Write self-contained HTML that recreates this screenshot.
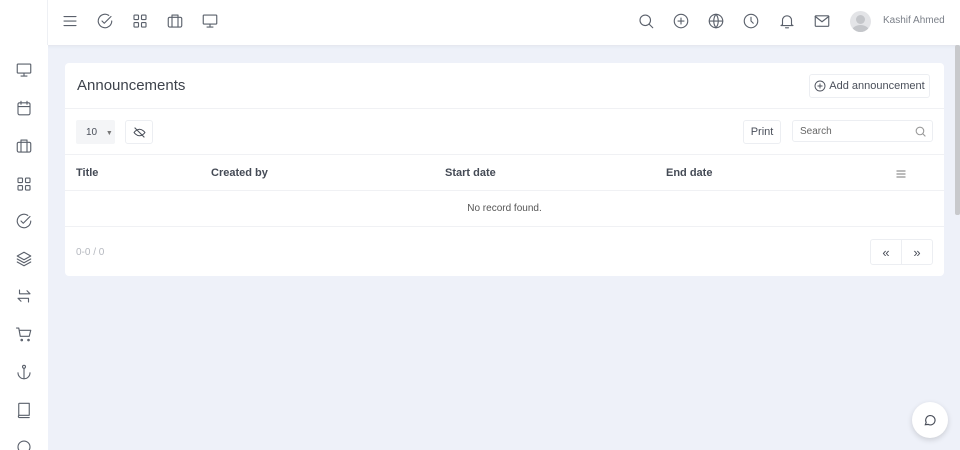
<!DOCTYPE html>
<html><head><meta charset="utf-8"><style>
*{box-sizing:border-box;margin:0;padding:0}
html,body{width:960px;height:450px;overflow:hidden}
body{background:#eef1f9;font-family:"Liberation Sans",sans-serif;color:#4a4f5a;position:relative}
.top{position:absolute;left:0;top:0;width:960px;height:45px;background:#fff;box-shadow:0 1px 4px rgba(0,0,0,.06)}
.top .lb{position:absolute;left:0;top:0;width:48px;height:45px;border-right:1px solid #eef0f4}
.side{position:absolute;left:0;top:45px;width:48px;height:405px;background:#fff}
svg.i{position:absolute;width:18px;height:18px;fill:none;stroke:#5a606b;stroke-width:1.5;stroke-linecap:round;stroke-linejoin:round}
.card{position:absolute;left:65px;top:63px;width:879px;height:213px;background:#fff;border-radius:4px}
.row{position:absolute;left:0;width:879px;border-bottom:1px solid #f0f1f4}
.btn{position:absolute;border:1px solid #eceef2;border-radius:3px;background:#fff;font-size:11px;color:#4a4f5a;display:flex;align-items:center;justify-content:center}
.th{position:absolute;top:12px;font-size:11px;font-weight:bold;color:#444a55}
.scroll{position:absolute;left:955px;top:45px;width:5px;height:170px;background:#c8c9cc;border-radius:2px}
</style></head><body>
<div class="top"><div class="lb"></div>
<svg class="i" style="left:61px;top:12px" viewBox="0 0 24 24"><path d="M4 6h16M4 12h16M4 18h16"/></svg>
<svg class="i" style="left:96px;top:12px" viewBox="0 0 24 24"><path d="M21 12a9 9 0 1 1-4-7.5"/><path d="M8 12l3 3 9-9"/></svg>
<svg class="i" style="left:131px;top:12px" viewBox="0 0 24 24"><rect x="4" y="4" width="6" height="6" rx="1"/><rect x="14" y="4" width="6" height="6" rx="1"/><rect x="4" y="14" width="6" height="6" rx="1"/><rect x="14" y="14" width="6" height="6" rx="1"/></svg>
<svg class="i" style="left:166px;top:12px" viewBox="0 0 24 24"><rect x="3" y="7" width="18" height="13" rx="2"/><path d="M8 7V4h8v3M8 7v13M16 7v13"/></svg>
<svg class="i" style="left:201px;top:12px" viewBox="0 0 24 24"><rect x="3" y="4" width="18" height="12" rx="1"/><path d="M12 16v4M8 20h8"/></svg>
<svg class="i" style="left:637px;top:12px" viewBox="0 0 24 24"><circle cx="11" cy="11" r="7"/><path d="M16 16l5 5"/></svg>
<svg class="i" style="left:672px;top:12px" viewBox="0 0 24 24"><circle cx="12" cy="12" r="9"/><path d="M12 8v8M8 12h8"/></svg>
<svg class="i" style="left:707px;top:12px" viewBox="0 0 24 24"><circle cx="12" cy="12" r="9"/><path d="M3 12h18M12 3c-4 5-4 13 0 18M12 3c4 5 4 13 0 18"/></svg>
<svg class="i" style="left:742px;top:12px" viewBox="0 0 24 24"><circle cx="12" cy="12" r="9"/><path d="M12 7v5l3 3"/></svg>
<svg class="i" style="left:778px;top:12px" viewBox="0 0 24 24"><path d="M6 17V11a6 6 0 0 1 12 0v6l2 1H4z"/><path d="M10 21h4"/></svg>
<svg class="i" style="left:813px;top:12px" viewBox="0 0 24 24"><rect x="3" y="5" width="18" height="14" rx="1"/><path d="M3 6l9 7 9-7"/></svg>
<div style="position:absolute;left:850px;top:11px;width:21px;height:21px;border-radius:50%;background:#e3e4e7;overflow:hidden"><div style="position:absolute;left:6px;top:4px;width:9px;height:9px;border-radius:50%;background:#c4c6ca"></div><div style="position:absolute;left:2px;top:14px;width:17px;height:12px;border-radius:50%;background:#c4c6ca"></div></div>
<div style="position:absolute;left:883px;top:15px;font-size:10px;color:#7a7f88">Kashif Ahmed</div>
</div>
<div class="side">
<svg class="i" style="left:15px;top:16px" viewBox="0 0 24 24"><rect x="3" y="4" width="18" height="12" rx="1"/><path d="M12 16v4M8 20h8"/></svg>
<svg class="i" style="left:15px;top:54px" viewBox="0 0 24 24"><rect x="4" y="5" width="16" height="16" rx="2"/><path d="M4 10h16M8 3v4M16 3v4"/></svg>
<svg class="i" style="left:15px;top:92px" viewBox="0 0 24 24"><rect x="3" y="7" width="18" height="13" rx="2"/><path d="M8 7V4h8v3M8 7v13M16 7v13"/></svg>
<svg class="i" style="left:15px;top:130px" viewBox="0 0 24 24"><rect x="4" y="4" width="6" height="6" rx="1"/><rect x="14" y="4" width="6" height="6" rx="1"/><rect x="4" y="14" width="6" height="6" rx="1"/><rect x="14" y="14" width="6" height="6" rx="1"/></svg>
<svg class="i" style="left:15px;top:167px" viewBox="0 0 24 24"><path d="M21 12a9 9 0 1 1-4-7.5"/><path d="M8 12l3 3 9-9"/></svg>
<svg class="i" style="left:15px;top:205px" viewBox="0 0 24 24"><path d="M12 3l9 5-9 5-9-5z"/><path d="M3 12l9 5 9-5M3 16l9 5 9-5"/></svg>
<svg class="i" style="left:15px;top:242px" viewBox="0 0 24 24"><path d="M6 4v5h14l-4-4M18 20v-5H4l4 4"/></svg>
<svg class="i" style="left:15px;top:280px" viewBox="0 0 24 24"><path d="M2 4h3l2 11h12l2-8H6"/><circle cx="9" cy="20" r="1"/><circle cx="18" cy="20" r="1"/></svg>
<svg class="i" style="left:15px;top:318px" viewBox="0 0 24 24"><circle cx="12" cy="5" r="2"/><path d="M12 7v14M4 13a8 8 0 0 0 16 0"/></svg>
<svg class="i" style="left:15px;top:356px" viewBox="0 0 24 24"><path d="M5 19V4a1 1 0 0 1 1-1h13v16H6a1 1 0 0 0 0 3h13"/></svg>
<svg class="i" style="left:15px;top:393px" viewBox="0 0 24 24"><circle cx="12" cy="12" r="8"/></svg>
</div>
<div class="card">
<div class="row" style="top:0;height:46px"><div style="position:absolute;left:12px;top:14px;font-size:15px;color:#3e434c">Announcements</div>
<div class="btn" style="left:744px;top:11px;width:121px;height:24px"><svg style="width:12px;height:12px;margin-right:3px;fill:none;stroke:#4a4f5a;stroke-width:1.8" viewBox="0 0 24 24"><circle cx="12" cy="12" r="10"/><path d="M12 7v10M7 12h10"/></svg>Add announcement</div></div>
<div class="row" style="top:46px;height:46px">
<div style="position:absolute;left:11px;top:11px;width:39px;height:24px;background:#f4f5f7;border-radius:2px;font-size:10px;padding:7px 0 0 10px">10 <span style="font-size:7px;margin-left:6px;color:#777">▼</span></div>
<div class="btn" style="left:60px;top:11px;width:28px;height:24px"><svg style="width:13px;height:13px;fill:none;stroke:#4a4f5a;stroke-width:2" viewBox="0 0 24 24"><path d="M2 12s4-6 10-6 10 6 10 6-4 6-10 6S2 12 2 12z"/><path d="M3 3l18 18"/></svg></div>
<div class="btn" style="left:678px;top:11px;width:38px;height:24px">Print</div>
<div class="btn" style="left:727px;top:11px;width:141px;height:22px;justify-content:flex-start;padding-left:7px;font-size:10px;color:#666">Search<svg style="position:absolute;right:5px;top:4px;width:13px;height:13px;fill:none;stroke:#999;stroke-width:2" viewBox="0 0 24 24"><circle cx="11" cy="11" r="7"/><path d="M16 16l5 5"/></svg></div></div>
<div class="row" style="top:92px;height:36px">
<div class="th" style="left:11px">Title</div><div class="th" style="left:146px">Created by</div><div class="th" style="left:380px">Start date</div><div class="th" style="left:601px">End date</div>
<svg style="position:absolute;left:830px;top:13px;width:12px;height:12px;fill:none;stroke:#777;stroke-width:2" viewBox="0 0 24 24"><path d="M3 6h18M3 12h18M3 18h18"/></svg></div>
<div class="row" style="top:128px;height:36px"><div style="position:absolute;left:0;width:879px;top:12px;text-align:center;font-size:10px;color:#555">No record found.</div></div>
<div style="position:absolute;left:11px;top:184px;font-size:10px;color:#b5b8bf">0-0 / 0</div>
<div class="btn" style="left:805px;top:176px;width:32px;height:26px;border-radius:3px 0 0 3px;font-size:13px">«</div>
<div class="btn" style="left:836px;top:176px;width:32px;height:26px;border-radius:0 3px 3px 0;font-size:13px">»</div>
</div>
<div class="scroll"></div>
<div style="position:absolute;left:912px;top:402px;width:36px;height:36px;border-radius:50%;background:#fff;box-shadow:0 2px 6px rgba(0,0,0,.15)"><svg style="position:absolute;left:11px;top:11px;width:14px;height:14px;fill:none;stroke:#4a4f5a;stroke-width:2" viewBox="0 0 24 24"><path d="M4 20l1.5-4A8 8 0 1 1 9 19.5z"/></svg></div>
</body></html>
